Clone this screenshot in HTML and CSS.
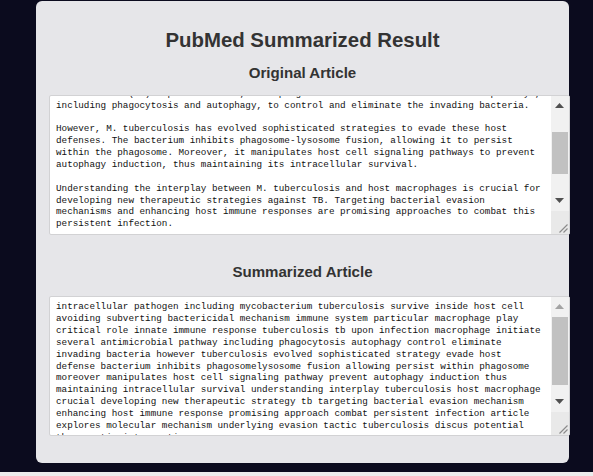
FILE: index.html
```html
<!DOCTYPE html>
<html lang="en">
<head>
<meta charset="utf-8">
<title>PubMed Summarized Result</title>
<link rel="stylesheet" href="styles.css">
</head>
<body>
<div class="page">
  <main class="card">
    <h1 class="title">PubMed Summarized Result</h1>

    <h2 class="section-title">Original Article</h2>
    <div class="textbox textbox--original">
      <div class="textbox__view">
        <div class="textbox__text textbox__text--scrolled">Mycobacterium tuberculosis, the causative agent of tuberculosis, is a highly successful intracellular pathogen that can survive and replicate inside host cells by avoiding or subverting the bactericidal mechanisms of the immune system. In particular, macrophages play a critical role in the innate immune response to infection with Mycobacterium tuberculosis (TB). Upon infection, macrophages initiate several antimicrobial pathways, including phagocytosis and autophagy, to control and eliminate the invading bacteria.

However, M. tuberculosis has evolved sophisticated strategies to evade these host defenses. The bacterium inhibits phagosome-lysosome fusion, allowing it to persist within the phagosome. Moreover, it manipulates host cell signaling pathways to prevent autophagy induction, thus maintaining its intracellular survival.

Understanding the interplay between M. tuberculosis and host macrophages is crucial for developing new therapeutic strategies against TB. Targeting bacterial evasion mechanisms and enhancing host immune responses are promising approaches to combat this persistent infection.

This article explores the molecular mechanisms underlying these evasion tactics and discusses potential therapeutic interventions.</div>
      </div>
      <div class="scrollbar">
        <div class="scrollbar__btn"><svg width="9" height="5" viewBox="0 0 9 5"><polygon points="0,5 4.5,0 9,5" class="arrow"/></svg></div>
        <div class="scrollbar__track"><div class="scrollbar__thumb scrollbar__thumb--original"></div></div>
        <div class="scrollbar__btn"><svg width="9" height="5" viewBox="0 0 9 5"><polygon points="0,0 4.5,5 9,0" class="arrow"/></svg></div>
        <div class="scrollbar__corner"><svg width="10" height="10" viewBox="0 0 10 10"><line x1="9.5" y1="1.5" x2="1.5" y2="9.5" class="grip"/><line x1="9.5" y1="5.5" x2="5.5" y2="9.5" class="grip"/></svg></div>
      </div>
    </div>

    <h2 class="section-title section-title--summary">Summarized Article</h2>
    <div class="textbox textbox--summary">
      <div class="textbox__view">
        <div class="textbox__text">intracellular pathogen including mycobacterium tuberculosis survive inside host cell avoiding subverting bactericidal mechanism immune system particular macrophage play critical role innate immune response tuberculosis tb upon infection macrophage initiate several antimicrobial pathway including phagocytosis autophagy control eliminate invading bacteria however tuberculosis evolved sophisticated strategy evade host defense bacterium inhibits phagosomelysosome fusion allowing persist within phagosome moreover manipulates host cell signaling pathway prevent autophagy induction thus maintaining intracellular survival understanding interplay tuberculosis host macrophage crucial developing new therapeutic strategy tb targeting bacterial evasion mechanism enhancing host immune response promising approach combat persistent infection article explores molecular mechanism underlying evasion tactic tuberculosis discus potential therapeutic intervention</div>
      </div>
      <div class="scrollbar">
        <div class="scrollbar__btn"><svg width="9" height="5" viewBox="0 0 9 5"><polygon points="0,5 4.5,0 9,5" class="arrow arrow--disabled"/></svg></div>
        <div class="scrollbar__track"><div class="scrollbar__thumb scrollbar__thumb--summary"></div></div>
        <div class="scrollbar__btn"><svg width="9" height="5" viewBox="0 0 9 5"><polygon points="0,0 4.5,5 9,0" class="arrow"/></svg></div>
        <div class="scrollbar__corner"><svg width="10" height="10" viewBox="0 0 10 10"><line x1="9.5" y1="1.5" x2="1.5" y2="9.5" class="grip"/><line x1="9.5" y1="5.5" x2="5.5" y2="9.5" class="grip"/></svg></div>
      </div>
    </div>
  </main>
</div>
</body>
</html>
```

FILE: styles.css
```css
html {
  background: #ececec;
}

body {
  margin: 0;
}

.page {
  height: 472px;
  box-sizing: border-box;
  padding: 1px 0 0 36px;
  background: #0b0b1e;
}

.card {
  width: 533px;
  height: 462px;
  box-sizing: border-box;
  padding: 27.2px 13px 0 13px;
  background: #e6e6e9;
  border-radius: 6px;
}

.title {
  margin: 0;
  font-family: "Liberation Sans", Arial, sans-serif;
  font-weight: bold;
  font-size: 20.4px;
  line-height: 24px;
  color: #333333;
  text-align: center;
}

.section-title {
  margin: 12px 0 0 0;
  font-family: "Liberation Sans", Arial, sans-serif;
  font-weight: bold;
  font-size: 15.07px;
  line-height: 18px;
  color: #333333;
  text-align: center;
}

.section-title--summary {
  margin-top: 28.2px;
}

.textbox {
  display: flex;
  width: 521px;
  height: 140px;
  box-sizing: border-box;
  margin-top: 12.8px;
  border: 1px solid #d2d2d4;
  border-radius: 2px;
  background: #ffffff;
  overflow: hidden;
}

.textbox--summary {
  margin-top: 14.8px;
}

.textbox__view {
  flex: 1;
  min-width: 0;
  overflow: hidden;
  padding: 4.4px 6px 0 6px;
}

.textbox__text {
  font-family: "Liberation Mono", "DejaVu Sans Mono", monospace;
  font-size: 9.29px;
  line-height: 11.84px;
  color: #111111;
  white-space: pre-wrap;
}

.textbox__text--scrolled {
  margin-top: -59.8px;
}

.scrollbar {
  width: 18.5px;
  flex: none;
  display: flex;
  flex-direction: column;
  background: #f1f1f1;
}

.scrollbar__btn {
  height: 20px;
  flex: none;
  display: flex;
  align-items: center;
  justify-content: center;
}

.scrollbar__track {
  flex: 1;
  display: flex;
  flex-direction: column;
  padding: 0 1px;
}

.scrollbar__thumb {
  background: #c1c1c1;
}

.scrollbar__thumb--original {
  margin-top: 15.7px;
  height: 42.3px;
}

.scrollbar__thumb--summary {
  margin-top: 0;
  height: 68px;
}

.scrollbar__corner {
  height: 22px;
  flex: none;
  display: flex;
  align-items: flex-end;
  justify-content: flex-end;
  padding: 0 1px 1px 0;
  background: #e9e9e9;
}

.arrow {
  fill: #505050;
}

.arrow--disabled {
  fill: #a3a3a3;
}

.grip {
  stroke: #8a8a8a;
  stroke-width: 1.1;
}
```
